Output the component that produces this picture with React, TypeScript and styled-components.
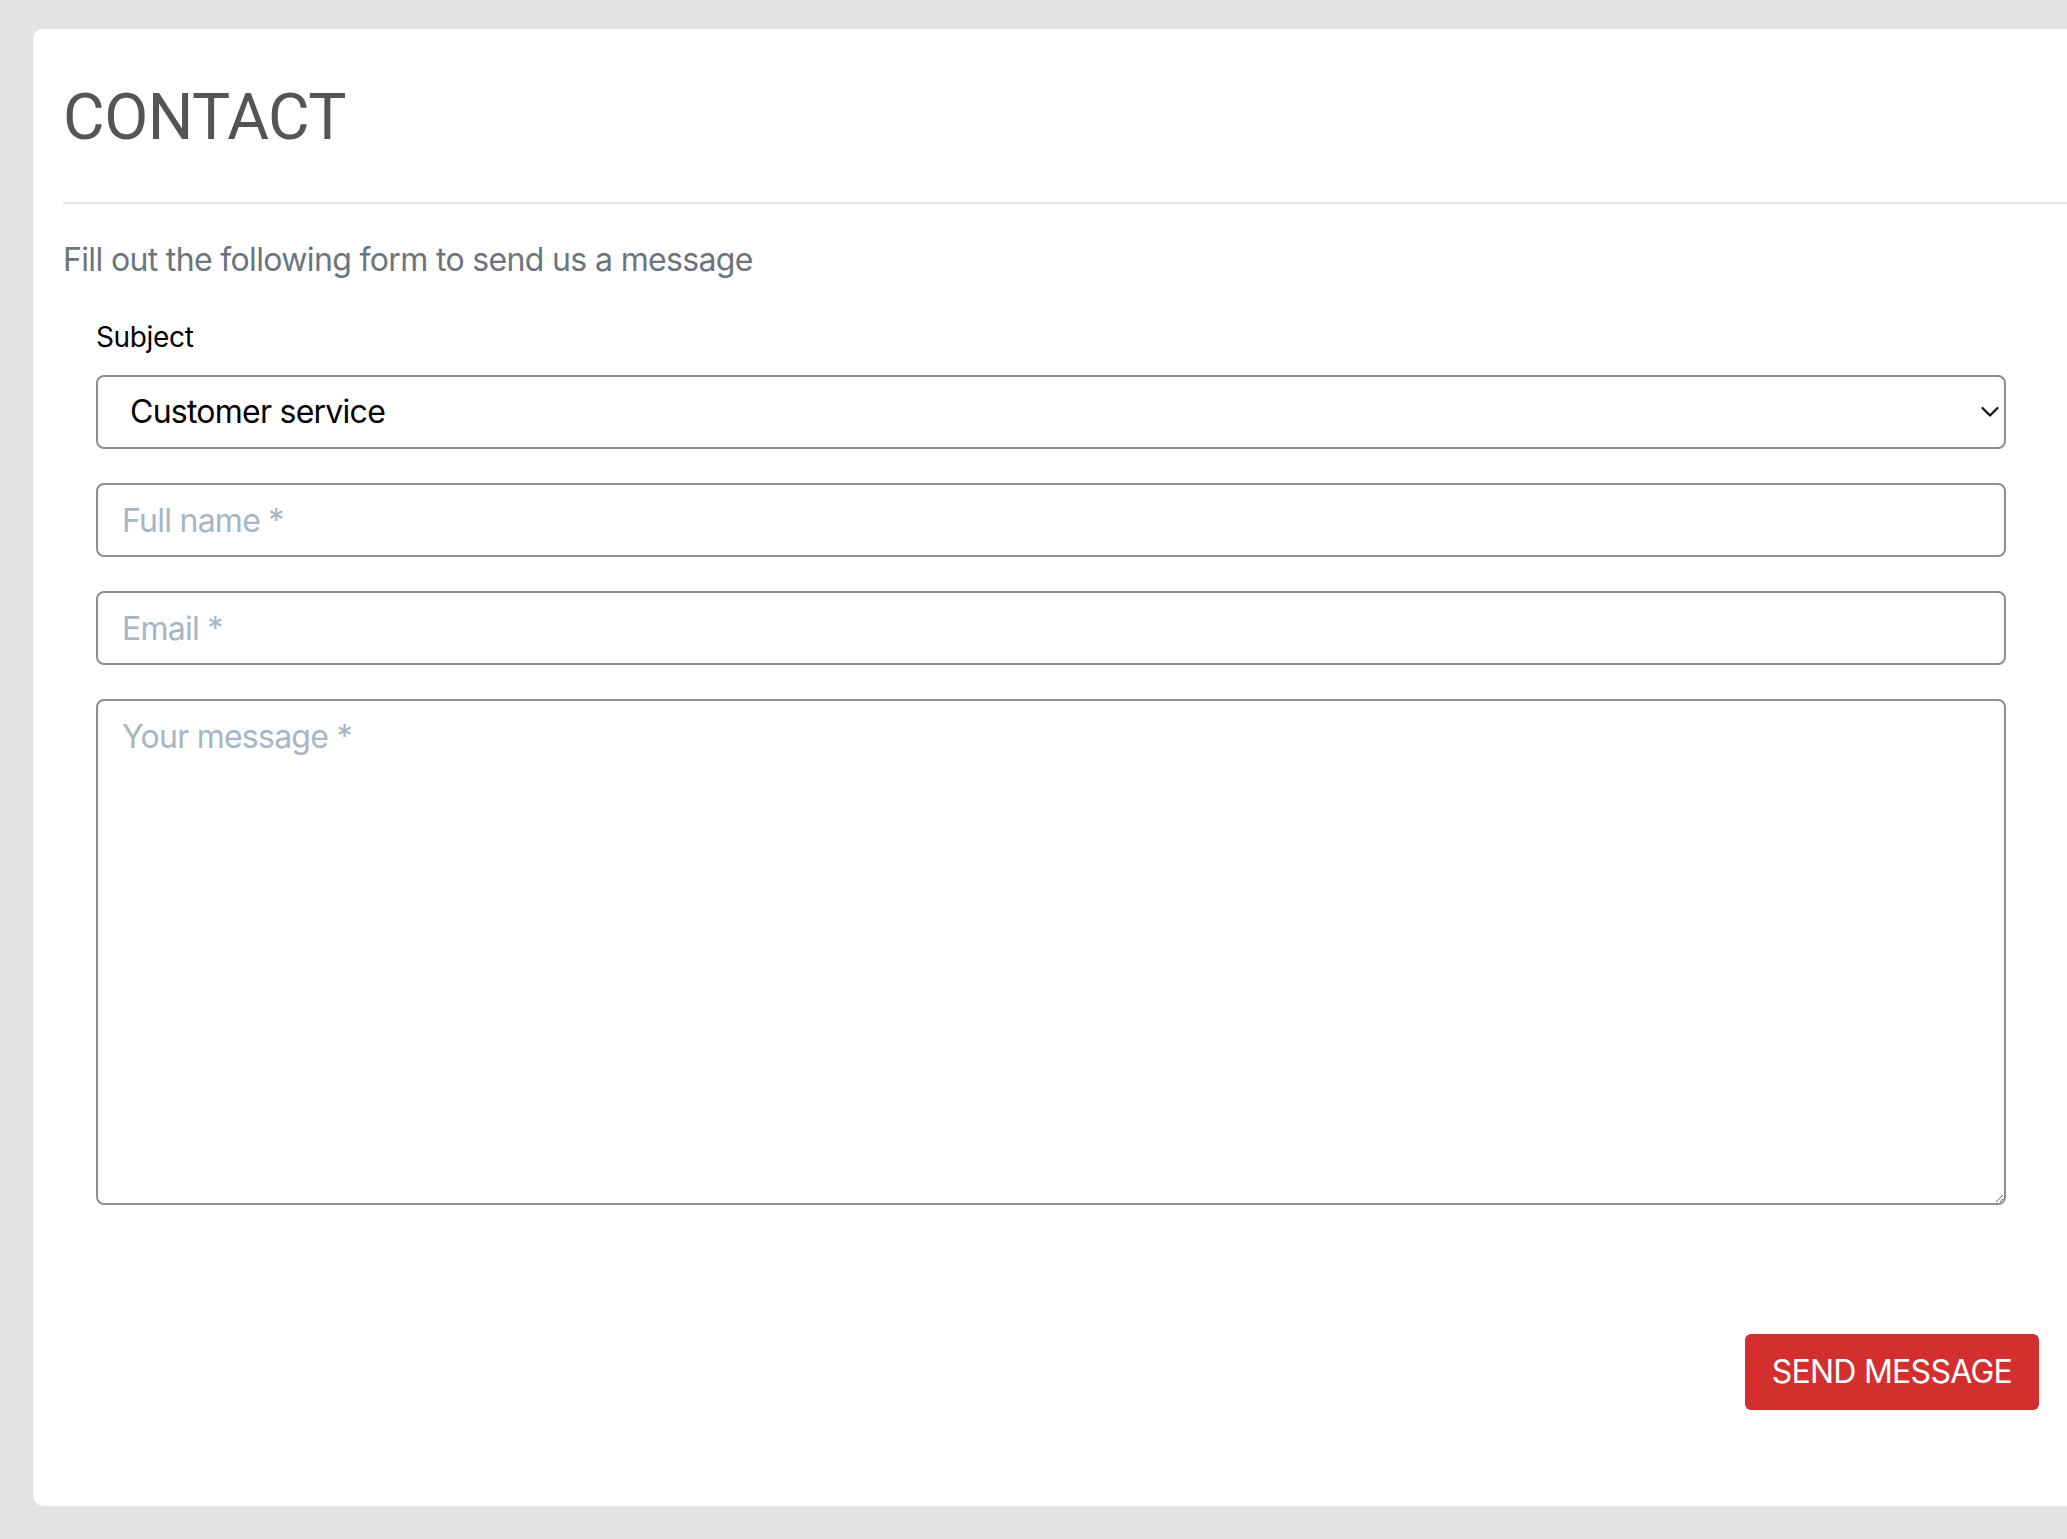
import styled, { createGlobalStyle } from "styled-components";

const GlobalStyle = createGlobalStyle`
    html, body {
        margin: 0;
        padding: 0;
        background: #e4e4e7;
        overflow: hidden;
    }
    body {
        font-family: Inter, "Liberation Sans", sans-serif;
    }
    * {
        box-sizing: border-box;
    }
`

const Chevron = () => (
    <svg width="18" height="11" viewBox="0 0 18 11" fill="none">
        <path d="M1.5 1.5 L9 9 L16.5 1.5" stroke="#111" strokeWidth="2.2" strokeLinecap="round" strokeLinejoin="round"/>
    </svg>
)

export default function App() {
    return (
        <StyledPage>
            <GlobalStyle/>
            <StyledCard>
                <StyledHeader>
                    <StyledTitle>CONTACT</StyledTitle>
                </StyledHeader>
                <StyledLead>Fill out the following form to send us a message</StyledLead>
                <StyledForm onSubmit={(e) => e.preventDefault()}>
                    <StyledFields>
                        <StyledGroup>
                            <StyledLabel htmlFor="subject">Subject</StyledLabel>
                            <StyledSelectWrap>
                                <StyledSelect id="subject" defaultValue="customer">
                                    <option value="customer">Customer service</option>
                                    <option value="sales">Sales</option>
                                    <option value="other">Other</option>
                                </StyledSelect>
                                <StyledChevron>
                                    <Chevron/>
                                </StyledChevron>
                            </StyledSelectWrap>
                        </StyledGroup>
                        <StyledInput type="text" placeholder="Full name *"/>
                        <StyledInput type="email" placeholder="Email *"/>
                        <StyledTextarea placeholder="Your message *"/>
                    </StyledFields>
                    <StyledActions>
                        <StyledButton type="submit">SEND MESSAGE</StyledButton>
                    </StyledActions>
                </StyledForm>
            </StyledCard>
        </StyledPage>
    );
}

const StyledPage = styled.div`
    padding: 29px 0 33px 33px;
`
const StyledCard = styled.div`
    width: 2100px;
    background: #ffffff;
    border-radius: 10px 0 0 10px;
    padding: 50px 0 96px 30px;
`
const StyledHeader = styled.div`
    padding-bottom: 46px;
    border-bottom: 2px solid #e6e6e8;
`
const StyledTitle = styled.h1`
    margin: 0;
    font-family: Roboto, "Liberation Sans", sans-serif;
    font-weight: 400;
    font-size: 64px;
    line-height: 77px;
    letter-spacing: -0.5px;
    color: #555555;
`
const StyledLead = styled.p`
    margin: 32px 0 0;
    font-size: 32px;
    line-height: 48px;
    letter-spacing: -0.65px;
    color: #6c757d;
`
const StyledForm = styled.form`
    width: 1976px;
    margin-top: 32px;
`
const StyledFields = styled.div`
    display: flex;
    flex-direction: column;
    gap: 34px;
    padding: 0 33px;
`
const StyledGroup = styled.div`
    display: flex;
    flex-direction: column;
    gap: 17px;
`
const StyledLabel = styled.label`
    font-size: 28px;
    line-height: 42px;
    letter-spacing: -0.35px;
    color: #000000;
`
const fieldBase = `
    width: 100%;
    border: 2px solid #8e8e8e;
    border-radius: 8px;
    background: #ffffff;
    font-family: Inter, "Liberation Sans", sans-serif;
    font-size: 32px;
    line-height: 48px;
    letter-spacing: -0.75px;
    color: #000000;
    outline: none;

    &::placeholder {
        color: #a8b5c5;
        opacity: 1;
    }
`
const StyledSelectWrap = styled.div`
    position: relative;
`
const StyledSelect = styled.select`
    ${fieldBase};
    height: 74px;
    padding: 0 60px 0 32px;
    appearance: none;
    -webkit-appearance: none;
`
const StyledChevron = styled.span`
    position: absolute;
    right: 7px;
    top: 50%;
    transform: translateY(-50%);
    display: flex;
    pointer-events: none;
`
const StyledInput = styled.input`
    ${fieldBase};
    height: 74px;
    padding: 0 24px;
`
const StyledTextarea = styled.textarea`
    ${fieldBase};
    height: 506px;
    padding: 12px 24px;
    resize: vertical;
    display: block;
`
const StyledActions = styled.div`
    display: flex;
    justify-content: flex-end;
    margin-top: 129px;
`
const StyledButton = styled.button`
    border: none;
    border-radius: 6px;
    background: #d32f2f;
    color: #ffffff;
    font-family: Inter, "Liberation Sans", sans-serif;
    font-size: 32px;
    line-height: 48px;
    letter-spacing: -0.75px;
    padding: 14px 27px;
    cursor: pointer;
`
